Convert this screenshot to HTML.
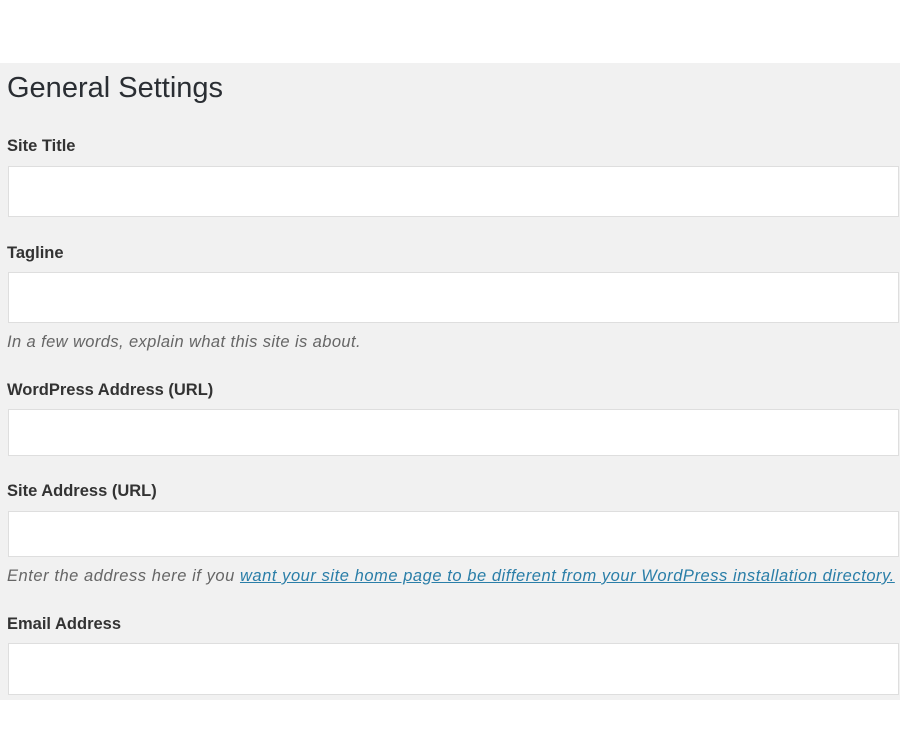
<!DOCTYPE html>
<html><head><style>
body{margin:0;width:900px;height:754px;background:#fff;font-family:"Liberation Sans",sans-serif;position:relative;overflow:hidden}
.panel{position:absolute;left:0;top:63px;width:900px;height:637px;background:#f1f1f1}
.t{position:absolute;left:7px;color:#23282d;white-space:nowrap}
h1{position:absolute;left:7px;top:72px;margin:0;font-weight:normal;font-size:29px;color:#2a2e33}
.l{font-size:16.5px;font-weight:bold;color:#333}
.d{font-size:16.5px;font-style:italic;color:#666;letter-spacing:0.4px}
.d2{letter-spacing:0.55px}
.d a{color:#2a7ea8;text-decoration:underline}
.i{position:absolute;left:8px;width:891px;background:#fff;border:1px solid #dedede;box-sizing:border-box}
</style></head><body>
<div class="panel"></div>
<h1>General Settings</h1>
<div class="t l" style="top:137px">Site Title</div>
<div class="i" style="top:166px;height:51px"></div>
<div class="t l" style="top:244px">Tagline</div>
<div class="i" style="top:272px;height:51px"></div>
<div class="t d" style="top:333px">In a few words, explain what this site is about.</div>
<div class="t l" style="top:381px">WordPress Address (URL)</div>
<div class="i" style="top:409px;height:47px"></div>
<div class="t l" style="top:482px">Site Address (URL)</div>
<div class="i" style="top:511px;height:46px"></div>
<div class="t d d2" style="top:567px">Enter the address here if you <a>want your site home page to be different from your WordPress installation directory.</a></div>
<div class="t l" style="top:615px">Email Address</div>
<div class="i" style="top:643px;height:52px"></div>
</body></html>
